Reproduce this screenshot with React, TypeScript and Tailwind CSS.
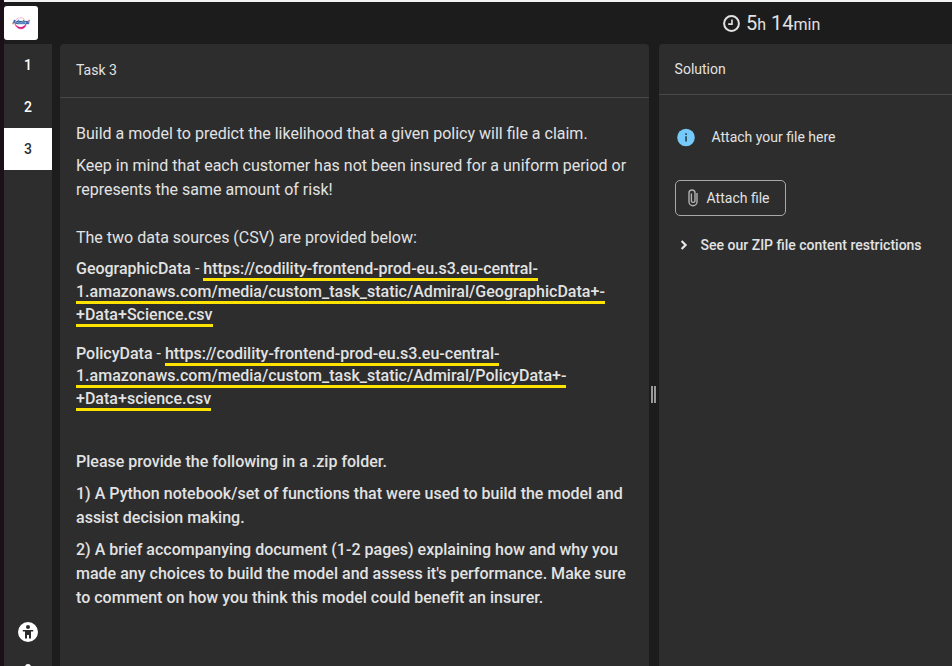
import React from "react";

function Logo() {
  return (
    <div className="flex h-[34px] w-[34px] items-center justify-center rounded-[3px] bg-white">
      <svg className="overflow-visible" width="24" height="16" viewBox="0 0 24 16">
        <path d="M6 6C8 2.8 13 1.4 15.6 4.6" fill="none" stroke="#f5a3c7" strokeWidth="0.8" />
        <path d="M6.2 9.3C8.5 13.5 15 13.5 17.2 8.6C16.5 16 7.5 15 6.2 9.3Z" fill="#d6117f" stroke="#d6117f" strokeWidth="0.5" />
        <text x="3.4" y="9" textLength="17" lengthAdjust="spacingAndGlyphs" fontFamily="Liberation Sans, sans-serif" fontSize="5.6" fontWeight="700" fontStyle="italic" fill="#1c559f" stroke="#1c559f" strokeWidth="0.3">Admiral</text>
      </svg>
    </div>
  );
}

function Sidebar() {
  return (
    <nav className="flex w-12 shrink-0 flex-col bg-[#2d2d2d] text-center text-sm font-medium leading-[42px] text-white">
      <div className="h-[42px]">1</div>
      <div className="h-[42px]">2</div>
      <div className="h-[42px] bg-white text-[#2d2d2d]">3</div>
      <div className="mt-[452px] flex justify-center">
        <svg width="20" height="20" viewBox="0 0 20 20">
          <circle cx="10" cy="10" r="10" fill="#fff" />
          <circle cx="10" cy="5" r="2" fill="#2d2d2d" />
          <path d="M4.8 8h10.4v1.5h-2.2v7.1h-2v-3.7H9v3.7H7V9.5H4.8Z" fill="#2d2d2d" />
        </svg>
      </div>
      <div className="mt-[22px] flex h-[2px] justify-center overflow-hidden">
        <span className="h-1.5 w-1.5 shrink-0 rounded-full bg-white" />
      </div>
    </nav>
  );
}

function LinkLine({ children }: { children: React.ReactNode }) {
  return <a className="border-b-[3px] border-[#ffe300]">{children}</a>;
}

function TaskPanel() {
  return (
    <section className="w-[589px] shrink-0 rounded-t bg-[#2d2d2d]">
      <h1 className="h-[54px] border-b border-[#484848] px-4 text-sm leading-[53px]">Task 3</h1>
      <div className="px-4 pt-6 text-base leading-6 whitespace-nowrap">
        <p>Build a model to predict the likelihood that a given policy will file a claim.</p>
        <p className="mt-2">
          Keep in mind that each customer has not been insured for a uniform period or
          <br />
          represents the same amount of risk!
        </p>
        <p className="mt-6">The two data sources (CSV) are provided below:</p>
        <p className="mt-[7px] font-medium leading-[23px]">
          GeographicData<span className="font-normal"> - </span>
          <LinkLine>https://codility-frontend-prod-eu.s3.eu-central-</LinkLine>
          <br />
          <span className="tracking-[0.016px]">
            <LinkLine>1.amazonaws.com/media/custom_task_static/Admiral/GeographicData+-</LinkLine>
            <br />
            <LinkLine>+Data+Science.csv</LinkLine>
          </span>
        </p>
        <p className="mt-[16.5px] font-medium leading-[22.5px]">
          PolicyData<span className="font-normal"> - </span>
          <LinkLine>https://codility-frontend-prod-eu.s3.eu-central-</LinkLine>
          <br />
          <span className="tracking-[0.016px]">
            <LinkLine>1.amazonaws.com/media/custom_task_static/Admiral/PolicyData+-</LinkLine>
            <br />
            <LinkLine>+Data+science.csv</LinkLine>
          </span>
        </p>
        <div className="mt-10 font-medium tracking-[0.01px]">
          <p>Please provide the following in a .zip folder.</p>
          <p className="mt-2">
            1) A Python notebook/set of functions that were used to build the model and
            <br />
            assist decision making.
          </p>
          <p className="mt-2">
            2) A brief accompanying document (1-2 pages) explaining how and why you
            <br />
            made any choices to build the model and assess it's performance. Make sure
            <br />
            to comment on how you think this model could benefit an insurer.
          </p>
        </div>
      </div>
    </section>
  );
}

function SolutionPanel() {
  return (
    <section className="min-w-0 flex-1 rounded-tl bg-[#2d2d2d] text-sm">
      <h2 className="h-[51px] border-b border-[#484848] px-4 leading-[50px]"><span className="-ml-[0.4px]">Solution</span></h2>
      <div className="pl-4">
        <div className="mt-8 flex h-5 items-center">
          <svg className="ml-[1.5px]" width="18" height="20" viewBox="0 0 18 20">
            <circle cx="9" cy="10.5" r="8.8" fill="#75caf9" />
            <path d="M8.2 6.2h1.7v1.7H8.2ZM8.2 9.3h1.7v5.3H8.2Z" fill="#29465a" />
          </svg>
          <span className="ml-[17px]">Attach your file here</span>
        </div>
        <button className="mt-[33px] flex h-9 w-[111px] items-center rounded-[5px] border border-[#a8a8a8] pl-3">
          <svg width="10" height="18" viewBox="0 0 10 18" fill="none" stroke="#b0b0b0" strokeWidth="1.4">
            <path d="M9 4v8.8a4 4 0 0 1-8 0V4a3 3 0 0 1 6 0v8.2a2 2 0 0 1-3.6 0V4.5" />
          </svg>
          <span className="ml-[8.6px]">Attach file</span>
        </button>
        <div className="mt-[19px] flex h-5 items-center font-medium">
          <svg className="ml-[5px]" width="8" height="10" viewBox="0 0 8 10" fill="none" stroke="#e7e7e7" strokeWidth="2.2">
            <path d="m1.6 1 4 4-4 4" />
          </svg>
          <span className="ml-[12.6px]">See our ZIP file content restrictions</span>
        </div>
      </div>
    </section>
  );
}

export default function App() {
  return (
    <div className="flex h-[666px] w-[952px] overflow-hidden bg-[#1c1c1c] font-['Roboto',sans-serif] text-[#e2e2e2]">
      <div className="w-1 shrink-0 bg-[#1b1018]" />
      <div className="flex w-[948px] flex-col border-t-2 border-[#f2f2f2]">
        <header className="flex h-[42px] shrink-0 items-start pt-1">
          <Logo />
          <div className="ml-[685px] flex h-[34px] items-center">
            <svg width="17" height="17" viewBox="0 0 17 17" fill="none" stroke="#e2e2e2">
              <circle cx="8.5" cy="8.5" r="7.4" strokeWidth="2" />
              <path d="M9 4.4v4.7H5.2" strokeWidth="1.6" />
            </svg>
            <div className="ml-1.5 pt-0.5 text-xl leading-6">
              5<span className="text-base">h</span> 14<span className="text-base">min</span>
            </div>
          </div>
        </header>
        <main className="flex min-h-0 flex-1">
          <Sidebar />
          <div className="w-2 shrink-0" />
          <TaskPanel />
          <div className="flex w-2.5 shrink-0 gap-px pl-0.5 pt-[342px]">
            <span className="h-[17px] w-0.5 bg-[#999]" />
            <span className="h-[17px] w-0.5 bg-[#999]" />
          </div>
          <SolutionPanel />
        </main>
      </div>
    </div>
  );
}
